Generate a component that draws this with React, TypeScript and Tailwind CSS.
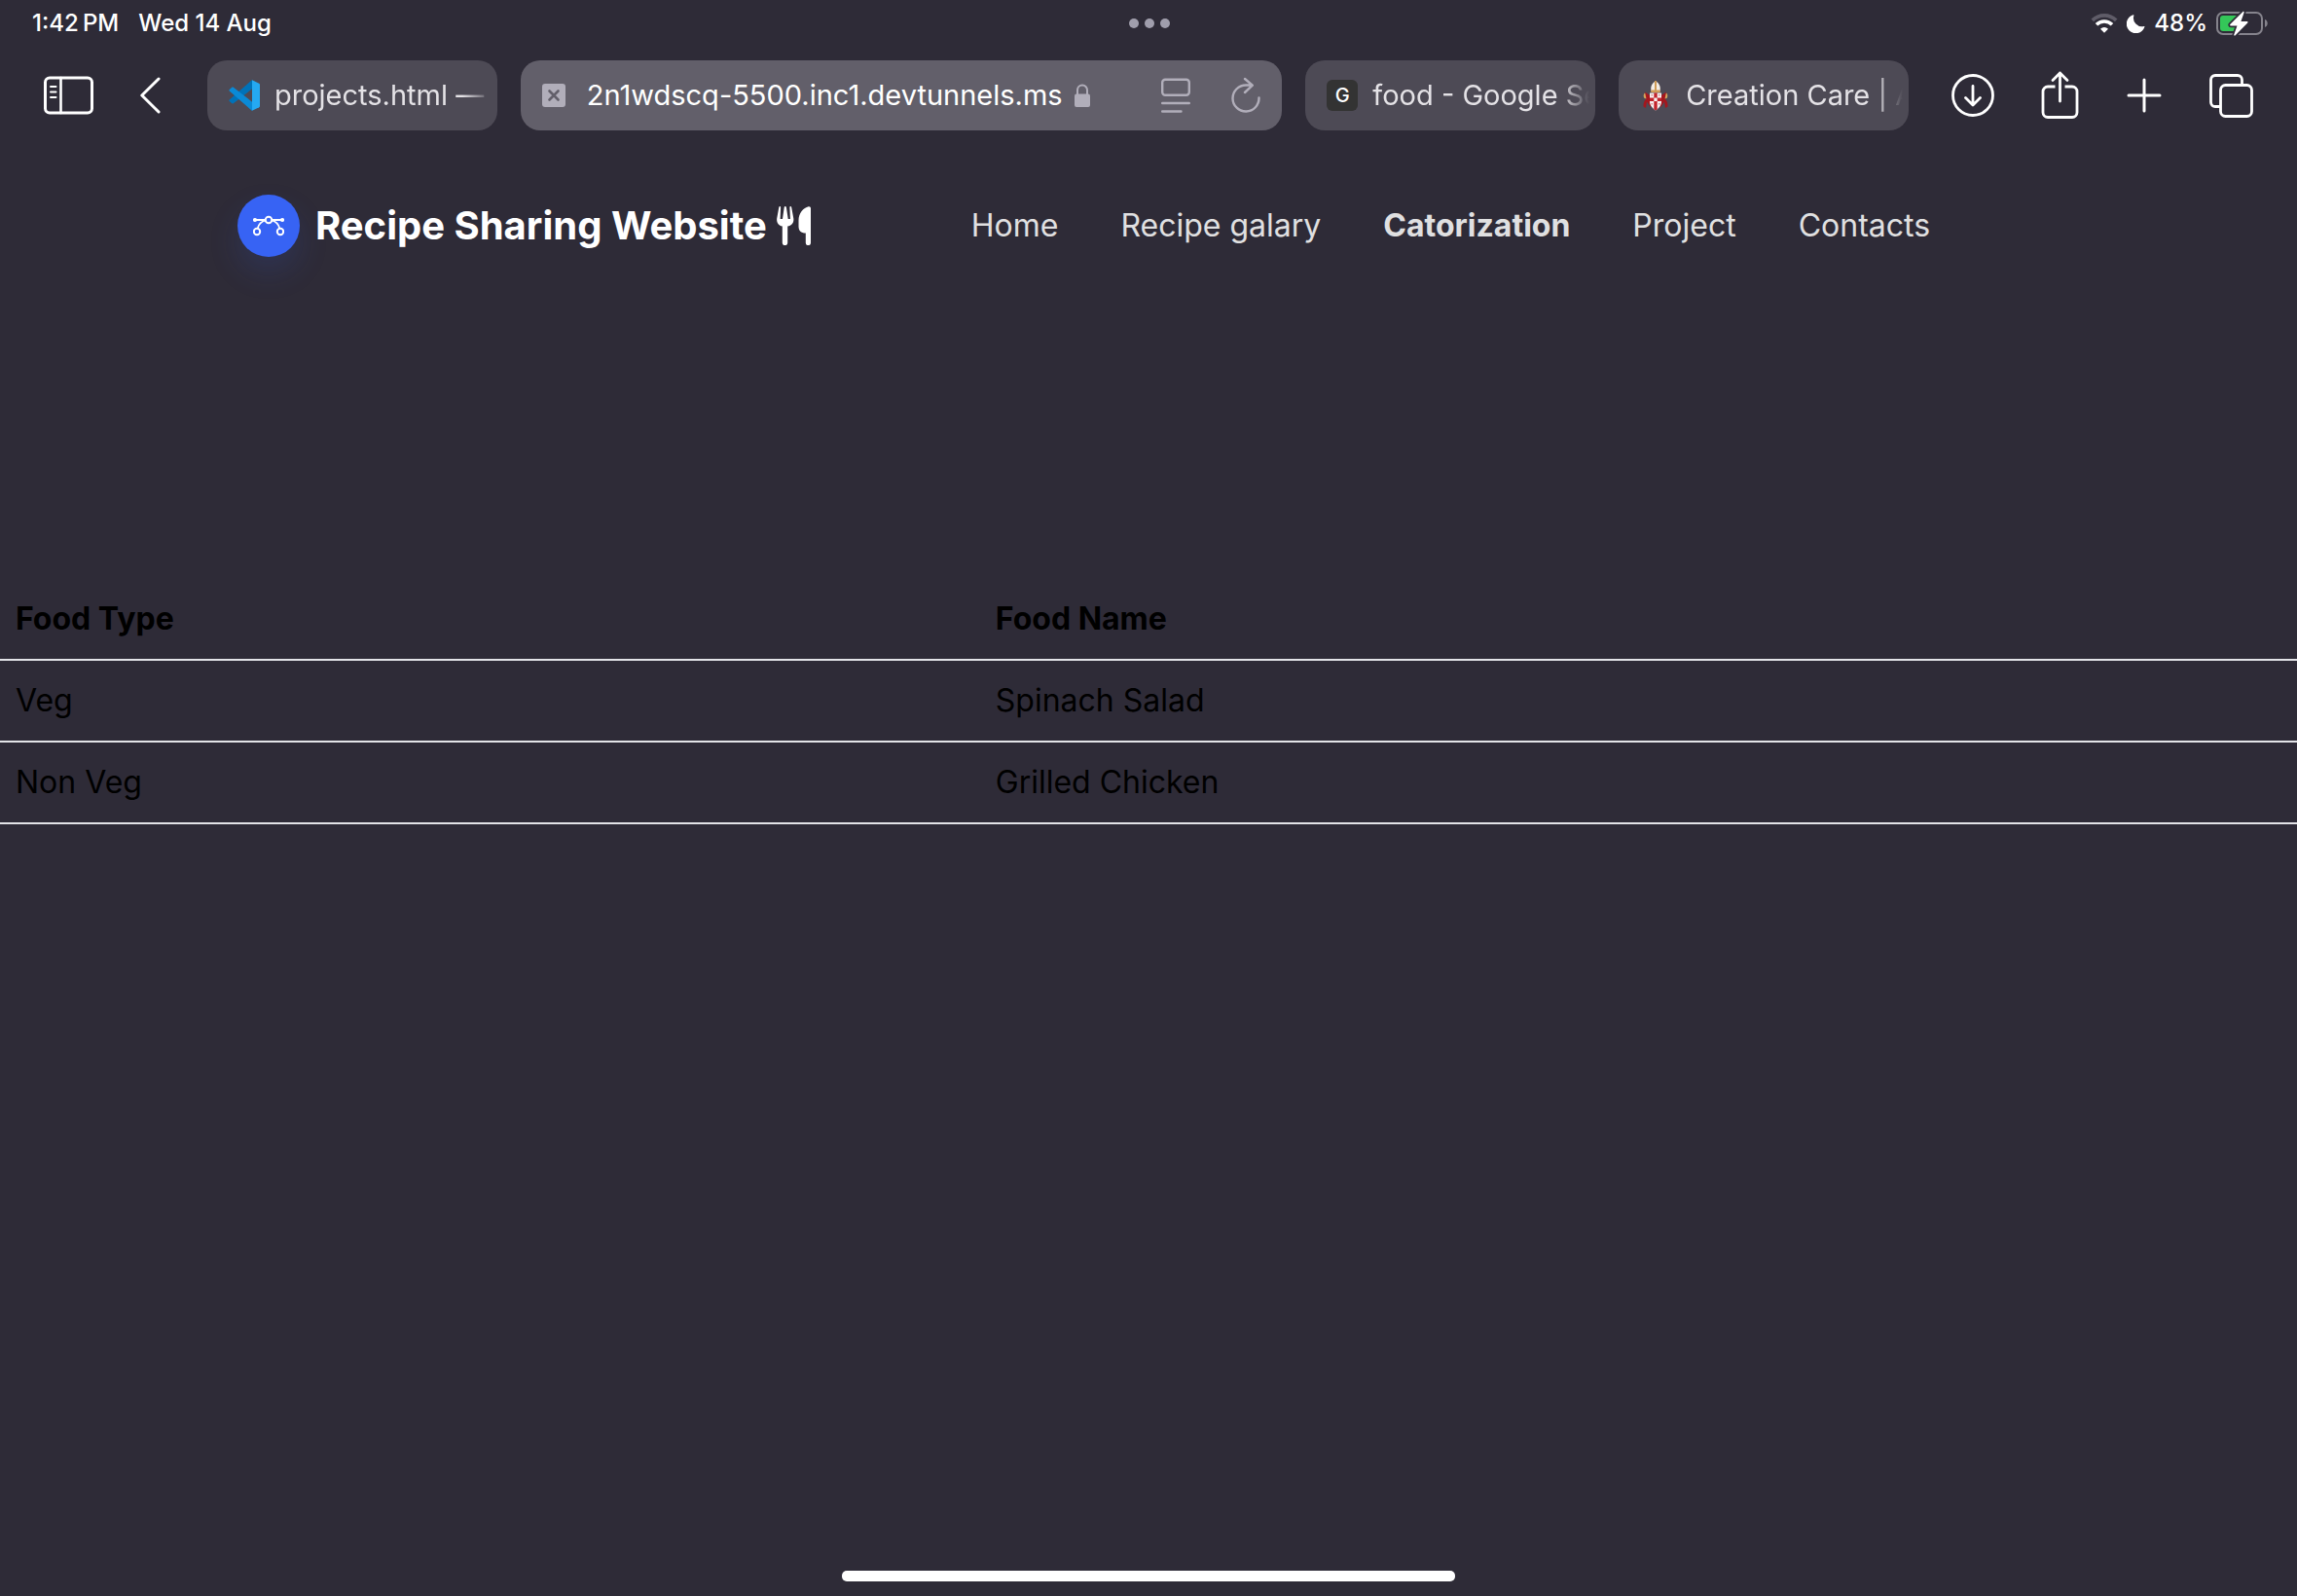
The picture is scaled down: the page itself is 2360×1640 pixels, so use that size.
import React from "react";

const TAB =
  "flex h-[72px] min-w-0 items-center gap-[15px] rounded-[20px] bg-[#4d4a55] pl-[22px] pr-[6px] text-left text-[#e4e2e6]";
const TAB_TITLE =
  "min-w-0 flex-1 overflow-hidden whitespace-nowrap text-[29px] leading-[40px] [mask-image:linear-gradient(to_right,black_calc(100%-30px),transparent)]";

function WifiIcon() {
  return (
    <svg viewBox="0 0 28 20" className="h-5 w-7" fill="none" aria-hidden="true">
      <path d="M1.8 6.9a17.3 17.3 0 0 1 24.4 0" stroke="#5f5c68" strokeWidth="3.6" />
      <path d="M6 11.3a11.4 11.4 0 0 1 16 0" stroke="white" strokeWidth="3.6" />
      <path d="M14 19.8l-4-4.1a5.8 5.8 0 0 1 8 0z" fill="white" />
    </svg>
  );
}

function MoonIcon() {
  return (
    <svg viewBox="0 0 19 19" className="h-[19px] w-[19px]" fill="white" aria-hidden="true">
      <path d="M6.7.3c.5-.2.9.2.7.7a8.6 8.6 0 0 0 10.500 10.900c.5-.1.8.3.6.7A9.600 9.600 0 1 1 6.700.3z" />
    </svg>
  );
}

function BatteryIcon() {
  return (
    <svg viewBox="0 0 53 26" className="h-[26px] w-[53px]" fill="none" aria-hidden="true">
      <rect x="1" y="2" width="46" height="22" rx="6" stroke="#85838c" strokeWidth="2" />
      <path d="M50 9c1.700.6 2.700 2.200 2.700 4s-1 3.400-2.700 4z" fill="#85838c" />
      <rect x="4" y="5" width="20" height="16" rx="3" fill="#34c759" />
      <path
        d="M27.200 1.200 14.300 14.100c-.5.500-.2 1.300.5 1.300h6.700l-3.200 9.100c-.3 1 .7 1.500 1.400.8L32.300 12.400c.5-.5.2-1.300-.5-1.300h-6.400L28.600 2c.3-1-.7-1.500-1.400-.8z"
        fill="white"
        stroke="#2e2b37"
        strokeWidth="3.500"
        paintOrder="stroke"
      />
    </svg>
  );
}

function StatusBar() {
  return (
    <div className="grid h-12 grid-cols-3 items-center pl-[33px] pr-[30px] text-[24px] font-medium leading-8 text-white">
      <div className="flex gap-5">
        <span>1:42{"\u2009"}PM</span>
        <span>Wed 14 Aug</span>
      </div>
      <button aria-label="Multitasking" className="flex gap-1.5 justify-self-center">
        <span className="size-2.5 rounded-full bg-[#a09eac]" />
        <span className="size-2.5 rounded-full bg-[#a09eac]" />
        <span className="size-2.5 rounded-full bg-[#a09eac]" />
      </button>
      <div className="flex items-center justify-end gap-[9px]">
        <WifiIcon />
        <MoonIcon />
        <span>48%</span>
        <BatteryIcon />
      </div>
    </div>
  );
}

function VsCodeIcon() {
  return (
    <svg viewBox="0 0 32 32" className="size-8 shrink-0" aria-hidden="true">
      <path d="M24 0 1 20.200a1.300 1.300 0 0 0 0 2l2 1.900c.5.500 1.300.5 1.800.1L24 9.300z" fill="#0072b8" />
      <path d="M24 32 1 11.800a1.300 1.300 0 0 1 0-2l2-1.900c.5-.5 1.300-.5 1.800-.1L24 22.700z" fill="#0a8ad6" />
      <path d="M24 .3 31.200 3.700c.5.300.8.700.8 1.300v22c0 .6-.3 1-.8 1.300L24 31.700z" fill="#25a9f2" />
    </svg>
  );
}

function CrestIcon() {
  return (
    <svg viewBox="0 0 32 32" className="size-8 shrink-0" aria-hidden="true">
      <path d="M9.500 16.500 5 13.500c-1.500 1-1.800 3.500-.5 5.500l5 1zM22.500 16.500l4.500-3c1.500 1 1.800 3.500.5 5.500l-5 1z" fill="#d3a45c" />
      <path d="m5 12.500 6 4v12l-4-6-1 6.500-2.500-1.500c0-3.500.5-6 3-8zM27 12.500l-6 4v12l4-6 1 6.500 2.500-1.500c0-3.500-.5-6-3-8z" fill="#a3171e" />
      <path d="M16 1c4 3 5.500 6 4.500 11h-9C10.500 7 12 4 16 1z" fill="#f4ece4" />
      <path d="M15 1h2v10h-2zM11.300 10.500h9.400V13h-9.400z" fill="#cf9b56" />
      <path d="M10 13.500h12v9c0 4-3 7-6 9-3-2-6-5-6-9z" fill="#f7f1f1" />
      <path d="M14.300 13.500h3.400v5H22v3.500h-4.300v8.300L16 31.500l-1.700-1.200V22H10v-3.500h4.300z" fill="#c2242b" />
      <path d="M14.300 18.500h3.400V22h-3.400z" fill="#f7f1f1" />
      <path d="M11.500 15h1.500v1.500h-1.500zM19 15h1.500v1.500H19zM11.500 24H13v1.500h-1.500zM19 24h1.500v1.500H19z" fill="#d98a8a" />
    </svg>
  );
}

function Toolbar() {
  return (
    <div className="flex items-center pl-[45px] pr-[45px] pt-[14px] text-white">
      <button aria-label="Show sidebar" className="shrink-0">
        <svg viewBox="0 0 51 40" className="h-10 w-[51px]" fill="none" stroke="currentColor" strokeLinecap="round">
          <rect x="1.500" y="2" width="48" height="36" rx="4.500" strokeWidth="3" />
          <path d="M17.500 2v36" strokeWidth="2.600" />
          <path d="M7 11h5.500M7 16.500h5.500M7 22h5.500" strokeWidth="2" />
        </svg>
      </button>
      <button aria-label="Back" className="ml-12 shrink-0">
        <svg viewBox="0 0 21 38" className="h-[38px] w-[21px]" fill="none" stroke="currentColor" strokeWidth="3" strokeLinecap="round" strokeLinejoin="round">
          <path d="M19 2 1.800 19 19 36" />
        </svg>
      </button>

      <div className="ml-12 mr-11 grid min-w-0 flex-1 grid-cols-[298fr_783fr_298fr_298fr] gap-6">
        <button className={TAB}>
          <VsCodeIcon />
          <span className={TAB_TITLE}>projects.html —</span>
        </button>

        <div className="flex h-[72px] min-w-0 items-center rounded-[20px] bg-[#625f6a] px-[22px]">
          <button aria-label="Close tab" className="grid size-6 shrink-0 place-items-center rounded-[3px] bg-[#b1aeba]">
            <svg viewBox="0 0 24 24" className="size-6" fill="none" stroke="#625f6a" strokeWidth="2.600" strokeLinecap="round">
              <path d="m7.500 7.500 9 9M16.500 7.500l-9 9" />
            </svg>
          </button>
          <input
            aria-label="Address"
            readOnly
            value="2n1wdscq-5500.inc1.devtunnels.ms"
            className="ml-[22px] bg-transparent text-[29px] leading-[40px] text-white outline-none field-sizing-content"
          />
          <svg viewBox="0 0 16 24" className="ml-3 h-6 w-4 shrink-0" aria-hidden="true">
            <path d="M3 12V6.500a5 5 0 0 1 10 0V12" fill="none" stroke="#b1aeba" strokeWidth="2" />
            <rect x="0" y="10.500" width="16" height="13.500" rx="2" fill="#b1aeba" />
          </svg>
          <button aria-label="Page menu" className="ml-auto shrink-0">
            <svg viewBox="0 0 30 38" className="h-[38px] w-[30px]" fill="none" stroke="#b1aeba" strokeWidth="2.400" strokeLinecap="round">
              <rect x="1.200" y="2.700" width="27.600" height="16" rx="3" />
              <path d="M1.200 27h27.600M1.200 35.500h19.300" />
            </svg>
          </button>
          <button aria-label="Reload" className="ml-[42px] shrink-0">
            <svg viewBox="0 0 30 38" className="h-[38px] w-[30px]" fill="none" stroke="#b1aeba" strokeWidth="2.400" strokeLinecap="round" strokeLinejoin="round">
              <path d="M28.500 21.500A13.500 13.500 0 1 1 15 8.500h6.500M14 2l7.800 6.700-7.800 7.300" />
            </svg>
          </button>
        </div>

        <button className={TAB}>
          <span className="grid size-8 shrink-0 place-items-center rounded-md bg-[#333333] text-[20px] font-medium leading-none text-white">G</span>
          <span className={TAB_TITLE}>food - Google Se</span>
        </button>
        <button className={TAB}>
          <CrestIcon />
          <span className={TAB_TITLE}>Creation Care | A</span>
        </button>
      </div>

      <div className="flex shrink-0 items-center gap-12">
        <button aria-label="Downloads">
          <svg viewBox="0 0 44 44" className="size-11" fill="none" stroke="currentColor" strokeWidth="2.800" strokeLinecap="round" strokeLinejoin="round">
            <circle cx="22" cy="22" r="20.500" />
            <path d="M22 12.500v19M14.500 24.500l7.500 7.500 7.500-7.500" />
          </svg>
        </button>
        <button aria-label="Share">
          <svg viewBox="0 0 40 50" className="h-[50px] w-10" fill="none" stroke="currentColor" strokeWidth="2.800" strokeLinecap="round" strokeLinejoin="round">
            <path d="M14.500 16H7a5 5 0 0 0-5 5v21.500a5 5 0 0 0 5 5h25a5 5 0 0 0 5-5V21a5 5 0 0 0-5-5h-7.500" strokeLinecap="butt" />
            <path d="M19.500 31V2M12 9.500 19.500 2 27 9.500" />
          </svg>
        </button>
        <button aria-label="New tab">
          <svg viewBox="0 0 36 36" className="size-9" fill="none" stroke="currentColor" strokeWidth="3" strokeLinecap="round">
            <path d="M18 2v32M2 18h32" />
          </svg>
        </button>
        <button aria-label="Show all tabs">
          <svg viewBox="0 0 46 46" className="size-[46px]" fill="none" stroke="currentColor" strokeWidth="2.800">
            <rect x="12.500" y="12.500" width="32" height="32" rx="5" />
            <path d="M12.500 34.500H7a4.500 4.500 0 0 1-4.500-4.500V7A4.500 4.500 0 0 1 7 2.500h23a4.500 4.500 0 0 1 4.500 4.500v5.500" />
          </svg>
        </button>
      </div>
    </div>
  );
}

function Logo() {
  return (
    <span className="grid size-16 place-items-center rounded-full bg-[#3763f4] shadow-[0_16px_32px_rgba(55,99,244,0.15)]">
      <svg viewBox="0 0 32 22" className="h-[22px] w-8" fill="none" stroke="white" strokeWidth="1.800" aria-hidden="true">
        <path d="M2 5h10.500M19.500 5H30M12.800 5.500C9 6.500 5.700 9.500 4.800 13.500M19.200 5.500c3.800 1 7.100 4 8 8" />
        <circle cx="2" cy="5" r="1.200" fill="white" />
        <circle cx="30" cy="5" r="1.200" fill="white" />
        <circle cx="16" cy="5" r="3.300" strokeWidth="2" />
        <circle cx="4" cy="17" r="3.200" strokeWidth="2" />
        <circle cx="28" cy="17" r="3.200" strokeWidth="2" />
      </svg>
    </span>
  );
}

function ForkKnife() {
  return (
    <svg viewBox="0 0 35 40" className="h-10 w-[35px]" fill="white" aria-hidden="true">
      <path d="M2.300 1 .2 12.500C-.3 17 2 19.500 5.800 20.500V37.500a2.700 2.700 0 0 0 5.400 0V20.500C15.500 19.500 17.800 17 17.300 12.500L15.200 1c-.3-1.300-1.900-1.200-1.800.2l.5 11.800h-2.200L9.900 1c-.2-1.300-2-1.300-2.200 0L6 13H3.600l.5-11.800C4.200-.2 2.600-.3 2.300 1z" />
      <path d="M35 2v35.500a2.600 2.600 0 0 1-5.200 0V27.500c-5 0-7.300-2.500-7.300-7v-6C22.500 7 27.500 1.500 32.700.2 34-.1 35 .8 35 2z" />
    </svg>
  );
}

const LINKS = ["Home", "Recipe galary", "Catorization", "Project", "Contacts"];

function SiteHeader() {
  return (
    <header className="mx-auto mt-[66px] flex w-full max-w-[1920px] items-center px-6">
      <a href="#home" className="mr-8 flex items-center text-white">
        <Logo />
        <span className="ml-4 text-[40px] font-bold leading-[60px]">Recipe Sharing Website</span>
        <span className="ml-2.5">
          <ForkKnife />
        </span>
      </a>
      <nav className="flex flex-1 justify-center gap-16 text-[32px] leading-[48px] text-[#e0e0e1]">
        {LINKS.map((label) => (
          <a key={label} href={"#" + label} className={label === "Catorization" ? "font-bold" : ""}>
            {label}
          </a>
        ))}
      </nav>
    </header>
  );
}

const ROWS = [
  ["Veg", "Spinach Salad"],
  ["Non Veg", "Grilled Chicken"],
];

export default function App() {
  return (
    <div className="flex min-h-screen flex-col bg-[#2e2b37] font-['Inter',sans-serif]">
      <StatusBar />
      <Toolbar />
      <SiteHeader />
      <table className="mt-[331px] w-full table-fixed text-left text-[32px] leading-[50px] text-black">
        <colgroup>
          <col className="w-[42.66%]" />
          <col />
        </colgroup>
        <thead>
          <tr className="border-b-2 border-[#e3e4e8]">
            <th scope="col" className="p-4 font-bold">Food Type</th>
            <th scope="col" className="p-4 font-bold">Food Name</th>
          </tr>
        </thead>
        <tbody>
          {ROWS.map(([type, name]) => (
            <tr key={type} className="border-b-2 border-[#e3e4e8]">
              <td className="p-4">{type}</td>
              <td className="p-4">{name}</td>
            </tr>
          ))}
        </tbody>
      </table>
      <div className="mx-auto mb-[15px] mt-auto h-[11px] w-[630px] rounded-[5px] bg-white" />
    </div>
  );
}
